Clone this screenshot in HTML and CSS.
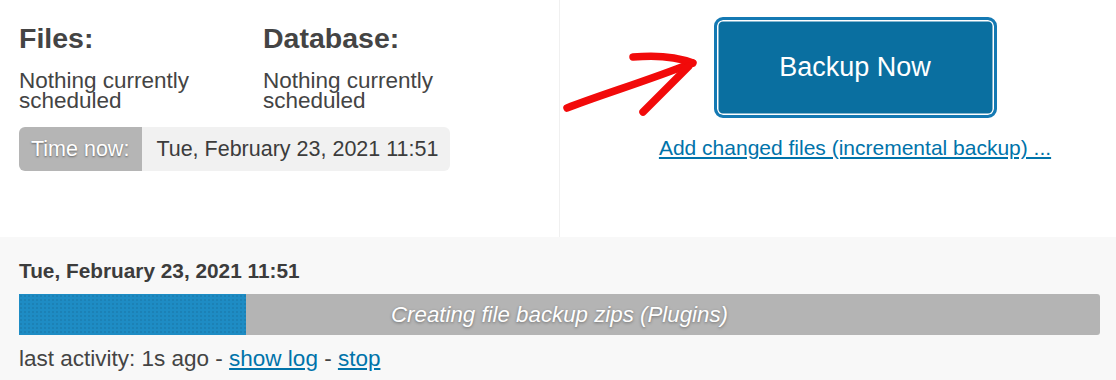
FILE: index.html
```html
<!DOCTYPE html>
<html lang="en">
<head>
  <meta charset="UTF-8" />
  <meta name="viewport" content="width=device-width, initial-scale=1.0"/>
  <title>Backup / Restore</title>
  <link rel="stylesheet" href="styles.css">
</head>
<body>
  <div class="top">
    <div class="schedule">
      <div class="cols">
        <div class="col">
          <h2>Files:</h2>
          <p>Nothing currently scheduled</p>
        </div>
        <div class="col">
          <h2>Database:</h2>
          <p>Nothing currently scheduled</p>
        </div>
      </div>
      <div class="time-now">
        <span class="time-label">Time now:</span>
        <span class="time-value">Tue, February 23, 2021 11:51</span>
      </div>
    </div>

    <div class="actions">
      <button class="backup-btn">Backup Now</button>
      <a href="#" class="incremental">Add changed files (incremental backup) ...</a>
    </div>

    <!-- hand drawn annotation arrow -->
    <svg class="arrow" width="160" height="90" viewBox="0 0 160 90">
      <path d="M12 68 C 45 55, 95 40, 137 23" />
      <path d="M78 17 C 100 15, 120 16, 138 23" />
      <path d="M88 72 C 105 55, 120 40, 134 26" />
    </svg>
  </div>

  <div class="running">
    <div class="run-date">Tue, February 23, 2021 11:51</div>
    <div class="progress">
      <div class="progress-fill" style="width: 21%;"></div>
      <span class="progress-text">Creating file backup zips (Plugins)</span>
    </div>
    <div class="activity">
      last activity: 1s ago - <a href="#">show log</a> - <a href="#">stop</a>
    </div>
  </div>
</body>
</html>
```

FILE: styles.css
```css
* {
  margin: 0;
  padding: 0;
  box-sizing: border-box;
  font-family: 'Liberation Sans', 'Helvetica Neue', Arial, sans-serif;
}

body {
  background-color: #fff;
  color: #444;
  width: 1116px;
  height: 380px;
  overflow: hidden;
}

a {
  color: #0073aa;
}

.top {
  position: relative;
  display: flex;
  height: 237px;
}

.schedule {
  width: 560px;
  padding: 22px 0 0 19px;
  border-right: 1px solid #f0f0f0;
}

.cols {
  display: flex;
}

.col {
  width: 244px;
}

.col h2 {
  font-size: 28.5px;
  line-height: 32px;
  font-weight: bold;
  color: #444;
}

.col p {
  margin-top: 17px;
  font-size: 22.5px;
  line-height: 20px;
  color: #444;
}

.time-now {
  display: inline-flex;
  margin-top: 16px;
  height: 44px;
  border-radius: 6px;
  overflow: hidden;
  font-size: 21.5px;
  line-height: 44px;
}

.time-label {
  background-color: #b5b5b5;
  color: #fff;
  padding: 0 13px 0 12px;
  text-shadow: 0 1px 2px rgba(0, 0, 0, 0.45);
}

.time-value {
  background-color: #f1f1f1;
  color: #3c3c3c;
  padding: 0 12px 0 14px;
}

.actions {
  flex: 1;
  display: flex;
  flex-direction: column;
  align-items: center;
  padding: 17px 0 0 34px;
}

.backup-btn {
  width: 283px;
  height: 101px;
  background-color: #0a6fa0;
  border: 3px solid #1479b3;
  border-radius: 9px;
  box-shadow: inset 0 0 0 1.5px #fff;
  color: #fff;
  font-size: 27px;
  cursor: pointer;
}

.incremental {
  margin-top: 18px;
  font-size: 21px;
  line-height: 24px;
}

.arrow {
  position: absolute;
  left: 555px;
  top: 40px;
}

.arrow path {
  fill: none;
  stroke: #f20a0a;
  stroke-width: 7.5;
  stroke-linecap: round;
}

.running {
  background-color: #f8f8f8;
  height: 143px;
  padding: 22px 16px 0 19px;
}

.run-date {
  font-size: 20.8px;
  line-height: 24px;
  font-weight: bold;
  color: #3c3c3c;
}

.progress {
  position: relative;
  margin-top: 11px;
  height: 41px;
  background-color: #b4b4b4;
  border-radius: 3px;
  display: flex;
  align-items: center;
  justify-content: center;
}

.progress-fill {
  position: absolute;
  left: 0;
  top: 0;
  bottom: 0;
  background-color: #1e8cc4;
  background-image: radial-gradient(rgba(0, 0, 0, 0.08) 0.7px, transparent 1px);
  background-size: 4px 4px;
}

.progress-text {
  position: relative;
  color: #fff;
  font-style: italic;
  font-size: 22.3px;
  text-shadow: 0 1px 3px rgba(0, 0, 0, 0.4);
}

.activity {
  margin-top: 11px;
  font-size: 22.5px;
  line-height: 26px;
  color: #444;
}
```
